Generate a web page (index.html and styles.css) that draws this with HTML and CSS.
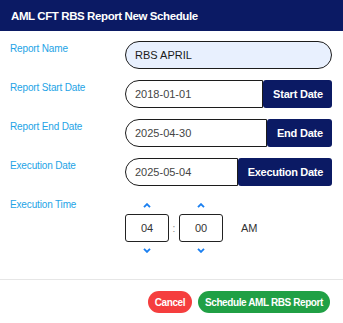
FILE: index.html
```html
<!DOCTYPE html>
<html>
<head>
<meta charset="utf-8">
<link rel="stylesheet" href="styles.css">
</head>
<body>
<div class="modal">
  <div class="modal-header">AML CFT RBS Report New Schedule</div>
  <div class="modal-body">
    <div class="row">
      <label class="lbl">Report Name</label>
      <div class="field"><div class="input pill name">RBS APRIL</div></div>
    </div>
    <div class="row">
      <label class="lbl">Report Start Date</label>
      <div class="field group"><div class="input date">2018-01-01</div><button class="addon">Start Date</button></div>
    </div>
    <div class="row">
      <label class="lbl">Report End Date</label>
      <div class="field group"><div class="input date">2025-04-30</div><button class="addon">End Date</button></div>
    </div>
    <div class="row">
      <label class="lbl">Execution Date</label>
      <div class="field group"><div class="input date">2025-05-04</div><button class="addon narrow">Execution Date</button></div>
    </div>
    <div class="row last">
      <label class="lbl">Execution Time</label>
      <div class="timepicker">
        <div class="tcol">
          <span class="chev"><svg width="8" height="5" viewBox="0 0 8 5"><polyline points="1,4.2 4,1.2 7,4.2" fill="none" stroke="#1a7ff0" stroke-width="1.9"/></svg></span>
          <div class="tbox">04</div>
          <span class="chev"><svg width="8" height="5" viewBox="0 0 8 5"><polyline points="1,0.8 4,3.8 7,0.8" fill="none" stroke="#1a7ff0" stroke-width="1.9"/></svg></span>
        </div>
        <span class="colon">:</span>
        <div class="tcol">
          <span class="chev"><svg width="8" height="5" viewBox="0 0 8 5"><polyline points="1,4.2 4,1.2 7,4.2" fill="none" stroke="#1a7ff0" stroke-width="1.9"/></svg></span>
          <div class="tbox">00</div>
          <span class="chev"><svg width="8" height="5" viewBox="0 0 8 5"><polyline points="1,0.8 4,3.8 7,0.8" fill="none" stroke="#1a7ff0" stroke-width="1.9"/></svg></span>
        </div>
        <span class="meridian">AM</span>
      </div>
    </div>
  </div>
  <div class="modal-footer">
    <button class="btn cancel">Cancel</button>
    <button class="btn submit">Schedule AML RBS Report</button>
  </div>
</div>
</body>
</html>
```
FILE: styles.css
```css
* { box-sizing: border-box; }
html, body { margin: 0; padding: 0; background: #fff; }
body { font-family: "Liberation Sans", Arial, sans-serif; width: 343px; height: 323px; overflow: hidden; }
.modal { display: flex; flex-direction: column; height: 323px; }
.modal-header {
  height: 31px; background: #0b1a64; color: #fff;
  font-weight: bold; font-size: 11.5px; letter-spacing: -0.4px;
  display: flex; align-items: center; padding-left: 11px;
}
.modal-body { padding: 10px 11px 20px 10px; }
.row { display: flex; align-items: flex-start; margin-bottom: 11px; }
.row.last { margin-bottom: 0; }
.lbl {
  width: 115px; flex: none; font-size: 10px; color: #23a3e6;
  padding-top: 2px; letter-spacing: -0.15px; line-height: 12px;
}
.field { flex: 1; display: flex; height: 28px; }
.input {
  flex: 1; height: 28px; border: 1px solid #1c1c1c; font-size: 11px;
  display: flex; align-items: center; padding-left: 9px; color: #444;
}
.input.pill { border-radius: 14px; background: #e8f0fe; color: #1a1a1a; }
.input.date { border-radius: 14px 0 0 14px; background: #fff; }
.addon {
  flex: none; height: 28px; border: none; border-radius: 3px;
  background: #0b1a64; color: #fff; font-family: inherit; font-weight: bold;
  font-size: 11px; letter-spacing: -0.2px; padding: 0 9px 0 10px;
}
.addon.narrow { letter-spacing: -0.3px; }
.timepicker { display: flex; align-items: center; }
.tcol { display: flex; flex-direction: column; align-items: center; width: 44px; }
.chev { height: 17px; display: flex; align-items: center; justify-content: center; }
.tbox {
  width: 44px; height: 28px; border: 1px solid #222; border-radius: 3px;
  display: flex; align-items: center; justify-content: center;
  font-size: 11px; color: #333;
}
.colon { width: 10px; text-align: center; font-size: 10px; color: #888; }
.meridian { margin-left: 18px; font-size: 11px; color: #333; }
.modal-footer {
  border-top: 1px solid #e6e6e6; margin-top: auto;
  display: flex; justify-content: flex-end; gap: 6px;
  padding: 11px 13px 10px 0;
}
.btn {
  height: 22px; border: none; border-radius: 11px; color: #fff;
  font-family: inherit; font-weight: bold; font-size: 10px; letter-spacing: -0.4px;
  padding: 0 7px;
}
.cancel { background: #f53e3e; width: 44px; padding: 0; }
.submit { background: #20a045; }
```
